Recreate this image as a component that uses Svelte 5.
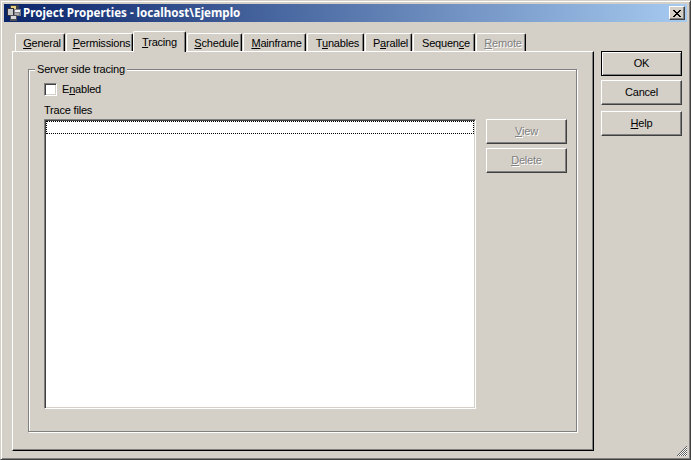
<script>
  const tabs = [
    { pre: '', key: 'G', post: 'eneral', w: 50 },
    { pre: '', key: 'P', post: 'ermissions', w: 67 },
    { pre: '', key: 'T', post: 'racing', w: 53, active: true },
    { pre: '', key: 'S', post: 'chedule', w: 55 },
    { pre: '', key: 'M', post: 'ainframe', w: 63 },
    { pre: 'T', key: 'u', post: 'nables', w: 57 },
    { pre: 'P', key: 'a', post: 'rallel', w: 47 },
    { pre: 'Sequen', key: 'c', post: 'e', w: 62 },
    { pre: '', key: 'R', post: 'emote', w: 50, disabled: true }
  ];
</script>

<div class="window">
  <div class="titlebar">
    <svg class="appicon" width="16" height="16" viewBox="0 0 16 16">
      <rect x="4" y="0" width="9" height="5" fill="#404048" />
      <rect x="5" y="1" width="5" height="3" fill="#e8d080" />
      <rect x="1" y="3" width="7" height="8" fill="#303038" />
      <rect x="2" y="4" width="5" height="6" fill="#c8c8c8" />
      <rect x="8" y="4" width="7" height="7" fill="#808088" />
      <rect x="9" y="5" width="5" height="2" fill="#f0f0f0" />
      <rect x="9" y="8" width="4" height="2" fill="#b0b0b0" />
      <rect x="4" y="10" width="7" height="6" fill="#505058" />
      <rect x="5" y="11" width="5" height="3" fill="#d8d8d8" />
    </svg>
    <span class="title">Project Properties - localhost\Ejemplo</span>
    <button class="close" aria-label="Close">
      <svg width="8" height="7" viewBox="0 0 8 7"><path d="M0 0h2v1H0zM6 0h2v1H6zM1 1h2v1H1zM5 1h2v1H5zM2 2h4v1H2zM3 3h2v1H3zM2 4h4v1H2zM1 5h2v1H1zM5 5h2v1H5zM0 6h2v1H0zM6 6h2v1H6z" fill="#000" /></svg>
    </button>
  </div>

  <div class="content">
    <div class="main">
      <div class="tabs">
        {#each tabs as t}
          <div class="tab" class:active={t.active} class:disabled={t.disabled} style="width:{t.w}px">
            <span>{t.pre}<u>{t.key}</u>{t.post}</span>
          </div>
        {/each}
      </div>
      <div class="panel">
        <div class="group">
          <div class="legend">Server side tracing</div>
          <label class="check">
            <span class="box"></span>
            <span>E<u>n</u>abled</span>
          </label>
          <div class="caption">Trace files</div>
          <div class="files">
            <div class="list"><div class="focusrow"></div></div>
            <div class="side">
              <button class="btn" disabled><u>V</u>iew</button>
              <button class="btn" disabled><u>D</u>elete</button>
            </div>
          </div>
        </div>
      </div>
    </div>
    <div class="actions">
      <button class="btn default">OK</button>
      <button class="btn">Cancel</button>
      <button class="btn help"><u>H</u>elp</button>
    </div>
  </div>

  <svg class="grip" width="10" height="10" viewBox="0 0 10 10">
    <path d="M9 0h1v1H9zM8 1h1v1H8zM9 2h1v1H9zM7 2h1v1H7zM6 3h1v1H6zM8 3h1v1H8zM5 4h1v1H5zM7 4h1v1H7zM9 4h1v1H9zM4 5h1v1H4zM6 5h1v1H6zM8 5h1v1H8zM3 6h1v1H3zM5 6h1v1H5zM7 6h1v1H7zM9 6h1v1H9zM2 7h1v1H2zM4 7h1v1H4zM6 7h1v1H6zM8 7h1v1H8zM1 8h1v1H1zM3 8h1v1H3zM5 8h1v1H5zM7 8h1v1H7zM9 8h1v1H9zM0 9h1v1H0zM2 9h1v1H2zM4 9h1v1H4zM6 9h1v1H6zM8 9h1v1H8z" fill="#606060" />
    <path d="M9 1h1v1H9zM8 2h1v1H8zM7 3h1v1H7zM9 3h1v1H9zM6 4h1v1H6zM8 4h1v1H8zM5 5h1v1H5zM7 5h1v1H7zM9 5h1v1H9zM4 6h1v1H4zM6 6h1v1H6zM8 6h1v1H8zM3 7h1v1H3zM5 7h1v1H5zM7 7h1v1H7zM9 7h1v1H9zM2 8h1v1H2zM4 8h1v1H4zM6 8h1v1H6zM8 8h1v1H8zM1 9h1v1H1zM3 9h1v1H3zM5 9h1v1H5zM7 9h1v1H7zM9 9h1v1H9z" fill="#fff" />
  </svg>
</div>

<style>
  :global(body) { margin: 0; background: #d4d0c8; }

  .window {
    position: relative;
    width: 691px;
    height: 460px;
    box-sizing: border-box;
    border: 1px solid;
    border-color: #d4d0c8 #404040 #404040 #d4d0c8;
    box-shadow: inset 1px 1px 0 #fff, inset -1px -1px 0 #808080;
    padding: 3px;
    background: #d4d0c8;
    font: 11px/13px "Liberation Sans", Arial, sans-serif;
    letter-spacing: -0.2px;
    color: #000;
    overflow: hidden;
  }

  .titlebar {
    display: flex;
    align-items: center;
    height: 18px;
    padding: 0 2px;
    background: linear-gradient(to right, #0a246a, #a6caf0);
  }
  .appicon { flex: none; margin-right: 1px; }
  .title {
    color: #fff;
    font: bold 11.6px/18px "Noto Sans", sans-serif;
    letter-spacing: 0;
    white-space: nowrap;
  }
  .close {
    margin-left: auto;
    width: 16px;
    height: 14px;
    padding: 0;
    display: flex;
    align-items: center;
    justify-content: center;
    background: #d4d0c8;
    border: 1px solid;
    border-color: #fff #404040 #404040 #fff;
    box-shadow: inset -1px -1px 0 #808080;
  }

  .content {
    display: flex;
    align-items: flex-start;
    padding: 9px 0 0 8px;
  }
  .main { width: 582px; flex: none; }

  .tabs {
    display: flex;
    align-items: flex-end;
    height: 20px;
    padding-left: 3px;
    position: relative;
    z-index: 1;
  }
  .tab {
    box-sizing: border-box;
    height: 18px;
    flex: none;
    padding-left: 4px;
    text-align: center;
    line-height: 18px;
    background: #d4d0c8;
    border-top: 1px solid #fff;
    border-left: 1px solid #fff;
    border-right: 1px solid #000;
    border-radius: 2px 2px 0 0;
    box-shadow: inset -1px 0 0 #808080;
    margin-right: 1px;
  }
  .tab.active {
    height: 21px;
    padding-left: 0;
    margin-left: -1px;
    margin-bottom: -1px;
    line-height: 20px;
  }
  .tab.disabled { color: #808080; text-shadow: 1px 1px 0 #fff; }

  .panel {
    box-sizing: border-box;
    height: 400px;
    padding: 17px 15px 0 15px;
    border: 1px solid;
    border-color: #fff #000 #000 #fff;
    box-shadow: inset -1px -1px 0 #808080;
  }

  .group {
    position: relative;
    box-sizing: border-box;
    width: 549px;
    height: 363px;
    padding: 13px 15px 0 15px;
    border: 1px solid #808080;
    box-shadow: 1px 1px 0 #fff, inset 1px 1px 0 #fff;
  }
  .legend {
    position: absolute;
    top: -7px;
    left: 6px;
    padding: 0 2px;
    background: #d4d0c8;
  }
  .check {
    display: flex;
    align-items: center;
    gap: 5px;
    height: 13px;
  }
  .box {
    box-sizing: border-box;
    width: 13px;
    height: 13px;
    background: #fff;
    border: 1px solid;
    border-color: #808080 #fff #fff #808080;
    box-shadow: inset 1px 1px 0 #404040, inset -1px -1px 0 #d4d0c8;
  }
  .caption { margin-top: 8px; height: 13px; }

  .files { display: flex; align-items: flex-start; margin-top: 2px; }
  .list {
    box-sizing: border-box;
    flex: none;
    width: 432px;
    height: 290px;
    padding: 1px;
    background: #fff;
    border: 1px solid;
    border-color: #808080 #fff #fff #808080;
    box-shadow: inset 1px 1px 0 #404040, inset -1px -1px 0 #d4d0c8;
  }
  .focusrow {
    box-sizing: border-box;
    height: 13px;
    border: 1px dotted #000;
  }
  .side { display: flex; flex-direction: column; gap: 4px; margin-left: 10px; }

  .btn {
    box-sizing: border-box;
    display: block;
    width: 81px;
    height: 25px;
    padding: 0 0 1px;
    background: #d4d0c8;
    border: 1px solid;
    border-color: #fff #404040 #404040 #fff;
    box-shadow: inset -1px -1px 0 #808080;
    font: inherit;
    letter-spacing: inherit;
    color: #000;
    text-align: center;
  }
  .btn:disabled { color: #808080; text-shadow: 1px 1px 0 #fff; }
  .btn.default {
    border: 1px solid #000;
    box-shadow: inset 1px 1px 0 #fff, inset -1px -1px 0 #808080;
  }

  .actions {
    display: flex;
    flex-direction: column;
    gap: 4px;
    margin: 20px 0 0 7px;
  }
  .help { margin-top: 2px; }

  .grip { position: absolute; right: 3px; bottom: 3px; }
</style>
